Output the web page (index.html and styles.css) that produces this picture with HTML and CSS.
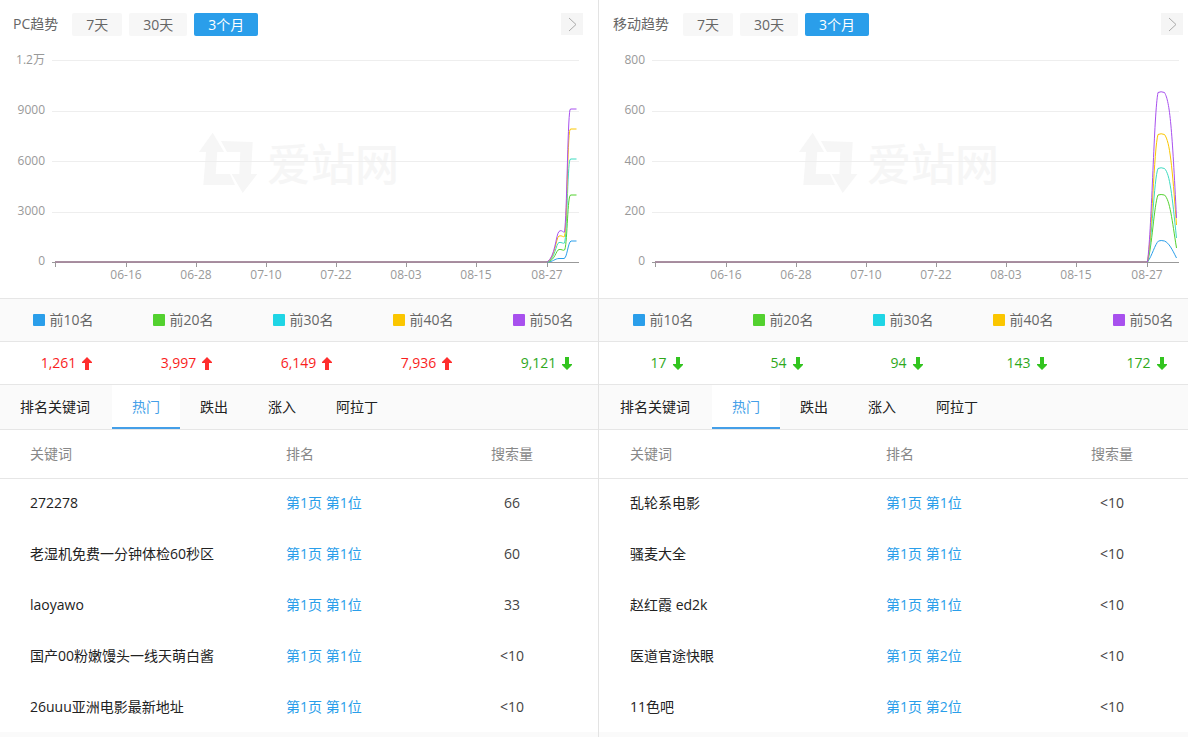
FILE: index.html
```html
<!DOCTYPE html>
<html lang="zh-CN">
<head>
<meta charset="utf-8">
<meta name="viewport" content="width=device-width, initial-scale=1">
<title>排名趋势</title>
<link rel="stylesheet" href="styles.css">
</head>
<body>
<svg class="sprite" aria-hidden="true">
  <symbol id="up" viewBox="0 0 10 13"><path d="M5 0L10 5V6H7V13H3V6H0V5Z"/></symbol>
  <symbol id="down" viewBox="0 0 10 13"><path d="M5 13L10 8V7H7V0H3V7H0V8Z"/></symbol>
  <symbol id="plot" viewBox="0 48 600 250">
    <g class="mark">
      <path d="M212.700 132.700L199 152H206L203.300 185H235L230 174H215.700L217.300 152H224Z"/>
      <path d="M221 141L252.700 142L251 174H257.300L242.700 193L231.700 174H239.300L240.300 152H227Z"/>
      <text x="267" y="181">爱站网</text>
    </g>
    <path class="grid" d="M52 60.500H579M52 111.500H579M52 161.500H579M52 212.500H579"/>
    <path class="axis" d="M52 262.500H579M55.500 262V267M126.500 262V267M196.500 262V267M266.500 262V267M336.500 262V267M406.500 262V267M476.500 262V267M547.500 262V267"/>
    <g class="dates">
      <text x="126" y="279">06-16</text><text x="196" y="279">06-28</text><text x="266" y="279">07-10</text><text x="336" y="279">07-22</text><text x="406" y="279">08-03</text><text x="476" y="279">08-15</text><text x="547" y="279">08-27</text>
    </g>
  </symbol>
</svg>
<main class="board">
  <section class="panel">
    <div class="sheet">
      <header class="head">
        <h2>PC趋势</h2>
        <div class="periods"><button type="button">7天</button><button type="button">30天</button><button type="button" class="on" aria-pressed="true">3个月</button></div>
        <button type="button" class="more" aria-label="更多"><svg viewBox="0 0 22 22"><path d="M8 5L15 11.500L8 18"/></svg></button>
      </header>
      <svg class="chart" viewBox="0 48 600 250" role="img" aria-label="PC趋势">
        <use href="#plot" x="0" y="48" width="600" height="250"/>
        <g class="scale"><text x="45" y="64">1.2万</text><text x="45" y="114">9000</text><text x="45" y="165">6000</text><text x="45" y="215">3000</text><text x="45" y="265">0</text></g>
        <g class="lines">
          <path class="s1" d="M55 262H547C553 262 555 258.500 559 258.500H564C567 258.500 568 242 571 241H576.500"/>
          <path class="s2" d="M55 262H547C555 261 556 250 559 249.500S563 251 564.500 250C567 248 567.500 200 570 195.500L571 195H576.500"/>
          <path class="s3" d="M55 262H547C555 260 556 243 559 242.500S563 244 564.500 243C567 236 567.500 165 570 159.500L571 159H576.500"/>
          <path class="s4" d="M55 262H547C555 259 556 237 559 236S563 237.500 564.500 236.500C567 225 567.500 136 570 129.500L571 129H576.500"/>
          <path class="s5" d="M55 262H547C555 258 556 234 559 231.500S563 233 564.500 232C567 215 567.500 122 570 109.500L571 109H576.500"/>
        </g>
      </svg>
      <table class="totals">
        <thead><tr><th scope="col"><i class="s1"></i>前10名</th><th scope="col"><i class="s2"></i>前20名</th><th scope="col"><i class="s3"></i>前30名</th><th scope="col"><i class="s4"></i>前40名</th><th scope="col"><i class="s5"></i>前50名</th></tr></thead>
        <tbody><tr>
          <td class="up">1,261<svg><use href="#up"/></svg></td><td class="up">3,997<svg><use href="#up"/></svg></td><td class="up">6,149<svg><use href="#up"/></svg></td><td class="up">7,936<svg><use href="#up"/></svg></td><td class="down">9,121<svg><use href="#down"/></svg></td>
        </tr></tbody>
      </table>
      <nav class="tabs"><h3>排名关键词</h3><a href="#" class="on">热门</a><a href="#">跌出</a><a href="#">涨入</a><a href="#">阿拉丁</a></nav>
      <table class="words">
        <thead><tr><th scope="col">关键词</th><th scope="col" class="rank">排名</th><th scope="col" class="volume">搜索量</th></tr></thead>
        <tbody>
          <tr><td>272278</td><td><a href="#">第1页 第1位</a></td><td>66</td></tr>
          <tr><td>老湿机免费一分钟体检60秒区</td><td><a href="#">第1页 第1位</a></td><td>60</td></tr>
          <tr><td>laoyawo</td><td><a href="#">第1页 第1位</a></td><td>33</td></tr>
          <tr><td>国产00粉嫩馒头一线天萌白酱</td><td><a href="#">第1页 第1位</a></td><td>&lt;10</td></tr>
          <tr><td>26uuu亚洲电影最新地址</td><td><a href="#">第1页 第1位</a></td><td>&lt;10</td></tr>
        </tbody>
      </table>
    </div>
  </section>
  <section class="panel">
    <div class="sheet">
      <header class="head">
        <h2>移动趋势</h2>
        <div class="periods"><button type="button">7天</button><button type="button">30天</button><button type="button" class="on" aria-pressed="true">3个月</button></div>
        <button type="button" class="more" aria-label="更多"><svg viewBox="0 0 22 22"><path d="M8 5L15 11.500L8 18"/></svg></button>
      </header>
      <svg class="chart" viewBox="0 48 600 250" role="img" aria-label="移动趋势">
        <use href="#plot" x="0" y="48" width="600" height="250"/>
        <g class="scale"><text x="45" y="64">800</text><text x="45" y="114">600</text><text x="45" y="165">400</text><text x="45" y="215">200</text><text x="45" y="265">0</text></g>
        <g class="lines">
          <path class="s1" d="M55 262H547.500C552 256 555 244 558.500 241Q561 240 564.500 241C569 243 572 249 576.500 258"/>
          <path class="s2" d="M55 262H547.500C552 248 554 205 558 195Q561 194 564.500 195C570 200 572 220 576.500 248"/>
          <path class="s3" d="M55 262H547.500C552 242 554 178 558 168.500Q561 167 564.500 168.500C570 174 572 195 576.500 238"/>
          <path class="s4" d="M55 262H547.500C552 235 554 148 558 134.500Q561 133 564.500 134.500C570 142 572 165 576.500 225"/>
          <path class="s5" d="M55 262H547.500C552 225 554 112 558 92.500Q561 91 564.500 92.500C570 102 572 128 576.500 218"/>
        </g>
      </svg>
      <table class="totals">
        <thead><tr><th scope="col"><i class="s1"></i>前10名</th><th scope="col"><i class="s2"></i>前20名</th><th scope="col"><i class="s3"></i>前30名</th><th scope="col"><i class="s4"></i>前40名</th><th scope="col"><i class="s5"></i>前50名</th></tr></thead>
        <tbody><tr>
          <td class="down">17<svg><use href="#down"/></svg></td><td class="down">54<svg><use href="#down"/></svg></td><td class="down">94<svg><use href="#down"/></svg></td><td class="down">143<svg><use href="#down"/></svg></td><td class="down">172<svg><use href="#down"/></svg></td>
        </tr></tbody>
      </table>
      <nav class="tabs"><h3>排名关键词</h3><a href="#" class="on">热门</a><a href="#">跌出</a><a href="#">涨入</a><a href="#">阿拉丁</a></nav>
      <table class="words">
        <thead><tr><th scope="col">关键词</th><th scope="col" class="rank">排名</th><th scope="col" class="volume">搜索量</th></tr></thead>
        <tbody>
          <tr><td>乱轮系电影</td><td><a href="#">第1页 第1位</a></td><td>&lt;10</td></tr>
          <tr><td>骚麦大全</td><td><a href="#">第1页 第1位</a></td><td>&lt;10</td></tr>
          <tr><td>赵红霞 ed2k</td><td><a href="#">第1页 第1位</a></td><td>&lt;10</td></tr>
          <tr><td>医道官途快眼</td><td><a href="#">第1页 第2位</a></td><td>&lt;10</td></tr>
          <tr><td>11色吧</td><td><a href="#">第1页 第2位</a></td><td>&lt;10</td></tr>
        </tbody>
      </table>
    </div>
  </section>
</main>
</body>
</html>
```
FILE: styles.css
```css
* { box-sizing: border-box; }
body {
  margin: 0;
  overflow-x: hidden;
  background: #fafafa;
  color: #222;
  font: 14px/20px "Open Sans", "Noto Sans CJK SC", sans-serif;
}
h2, h3 { margin: 0; font-size: 14px; font-weight: 400; }
a { color: #2a9eea; text-decoration: none; }
button { border: 0; padding: 0; font: inherit; cursor: pointer; }
table { width: 100%; border-collapse: separate; border-spacing: 0; table-layout: fixed; }
th { font-weight: 400; }
.sprite { display: none; }

.board {
  display: grid;
  grid-template-columns: repeat(2, minmax(600px, 1fr));
  min-height: 100vh;
}
.panel + .panel { margin-left: -2px; padding-left: 1px; border-left: 1px solid #e3e3e3; }
.sheet { background: #fff; }

.head { display: flex; align-items: flex-start; gap: 14px; height: 48px; padding: 13px 17px 0 13px; }
.head h2 { line-height: 22px; color: #666; }
.periods { display: flex; gap: 7px; }
.periods button { height: 23px; padding: 0 14px; border-radius: 2px; background: #f7f7f7; color: #666; line-height: 23px; }
.periods .on { background: #2a9eea; color: #fff; }
.more { width: 22px; height: 22px; margin-left: auto; background: #f5f5f5; }
.more svg { display: block; width: 22px; height: 22px; fill: none; stroke: #aaa; }

.chart { display: block; width: 100%; height: auto; font-size: 12px; }
.grid { fill: none; stroke: #eee; }
.axis { fill: none; stroke: #999; }
.dates { fill: #999; text-anchor: middle; }
.scale { fill: #999; text-anchor: end; }
.mark { fill: #f6f6f6; font-size: 44px; font-weight: 500; }
.lines path { fill: none; stroke: currentColor; }
.s1 { color: #2a9eea; }
.s2 { color: #53d12f; }
.s3 { color: #1fd5e5; }
.lines .s3 { color: #3ddbc0; }
.s4 { color: #fbc600; }
.s5 { color: #a850ee; }

.totals th, .totals td { height: 43px; border-top: 1px solid #e6e6e6; text-align: center; }
.totals th { padding: 0 0 0 7px; background: #fafafa; color: #666; }
.totals td { padding: 0 0 0 13px; }
.totals i { display: inline-block; width: 12px; height: 12px; margin-right: 4px; border-radius: 1px; background: currentColor; vertical-align: -1px; }
.totals svg { width: 10px; height: 13px; margin-left: 6px; vertical-align: -2px; }
.up { color: #f91d1d; }
.up svg { fill: #ff2d2d; }
.down { color: #2fa81c; }
.down svg { fill: #32c41f; }

.tabs { display: flex; height: 46px; border: solid #e6e6e6; border-width: 1px 0; background: #fafafa; line-height: 44px; }
.tabs h3 { padding: 0 22px 0 20px; }
.tabs a { padding: 0 20px; color: #222; }
.tabs .on { border-bottom: 2px solid #459fe8; background: #fff; color: #459fe8; }

.words th { height: 49px; padding: 0 0 0 30px; border-bottom: 1px solid #e6e6e6; color: #888; text-align: left; }
.words .rank { width: 168px; }
.words .volume { width: 176px; padding: 0; text-align: center; }
.words td { height: 51px; padding: 0 0 3px 30px; }
.words td:last-child { padding-left: 0; color: #444; text-align: center; }
.words tr:last-child td { height: 49px; padding-bottom: 1px; }
```
